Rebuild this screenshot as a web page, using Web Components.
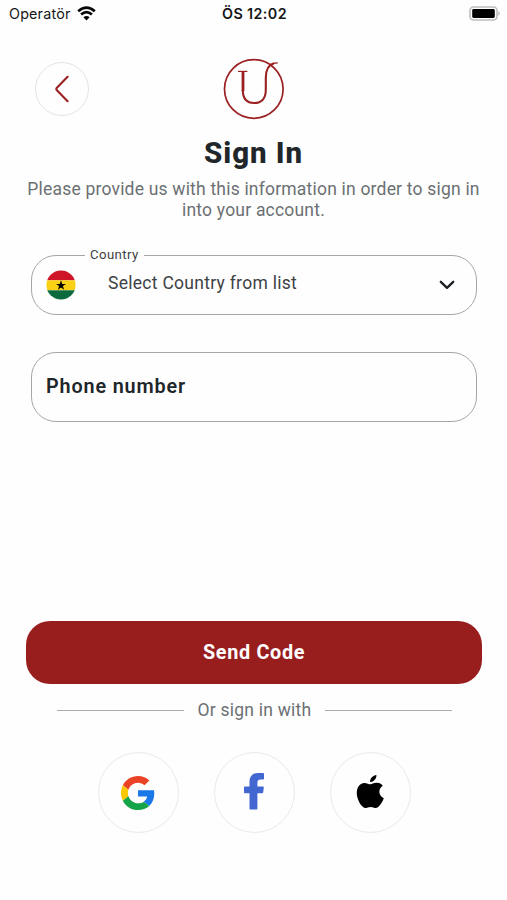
<!DOCTYPE html>
<html lang="en">
<head>
    <meta charset="UTF-8">
    <meta name="viewport" content="width=device-width, initial-scale=1.0">
    <title>Sign In</title>
    <style>
        body {
            margin: 0;
            background: #fefefe;
            color: #20262a;
            font-family: Roboto, "Liberation Sans", sans-serif;
        }
    </style>
</head>
<body>
    <sign-in-screen>
        <status-bar slot="status" carrier="Operatör" time="ÖS 12:02"></status-bar>
        <screen-header slot="header"></screen-header>
        <screen-title slot="title" heading="Sign In">
            <div>Please provide us with this information in order to sign in</div>
            <div>into your account.</div>
        </screen-title>
        <country-select slot="fields" label="Country">Select Country from list</country-select>
        <phone-field slot="fields">Phone number</phone-field>
        <main-button slot="actions">Send Code</main-button>
        <text-divider slot="actions">Or sign in with</text-divider>
        <social-row slot="actions">
            <social-button name="google"></social-button>
            <social-button name="facebook"></social-button>
            <social-button name="apple"></social-button>
        </social-row>
    </sign-in-screen>

    <script>
        class BaseElement extends HTMLElement {
            connectedCallback() {
                if (this.shadowRoot) return;
                this.attachShadow({ mode: 'open' });
                this.shadowRoot.innerHTML = this.render();
            }
        }

        class SignInScreen extends BaseElement {
            render() {
                return `
                    <style>
                        :host {
                            display: flex;
                            flex-direction: column;
                            width: 507px;
                            height: 900px;
                            overflow: hidden;
                        }
                        .fields {
                            display: flex;
                            flex-direction: column;
                            gap: 37px;
                            margin: 34px 30px 0 31px;
                        }
                        .actions {
                            display: flex;
                            flex-direction: column;
                            margin: auto 25px 67px 26px;
                        }
                    </style>
                    <slot name="status"></slot>
                    <slot name="header"></slot>
                    <slot name="title"></slot>
                    <div class="fields"><slot name="fields"></slot></div>
                    <div class="actions"><slot name="actions"></slot></div>
                `;
            }
        }

        class StatusBar extends BaseElement {
            render() {
                return `
                    <style>
                        :host {
                            display: grid;
                            grid-template-columns: 1fr auto 1fr;
                            align-items: center;
                            height: 28px;
                            padding: 0 7px 0 9px;
                            font: 14.3px/28px Inter, sans-serif;
                            color: #161616;
                        }
                        .left { display: flex; align-items: center; gap: 6px; }
                        .carrier { letter-spacing: 0.2px; }
                        .time { font-weight: 600; letter-spacing: 0.4px; }
                        .battery { justify-self: end; }
                        svg { display: block; margin-top: -2px; }
                    </style>
                    <div class="left">
                        <span class="carrier">${this.getAttribute('carrier')}</span>
                        <svg width="19" height="15" viewBox="0 0 19 15" fill="none" stroke="#080808" stroke-width="2.7">
                            <path d="M1.2 5.3Q9.5 -2 17.8 5.3"/>
                            <path d="M4.1 8.6Q9.5 3.8 14.9 8.6"/>
                            <path d="M9.5 14.4L6.4 11.2Q9.5 8.6 12.6 11.2Z" fill="#080808" stroke="none"/>
                        </svg>
                    </div>
                    <span class="time">${this.getAttribute('time')}</span>
                    <svg class="battery" width="31" height="15" viewBox="0 0 31 15">
                        <rect x="1" y="1" width="27" height="13" rx="3.5" fill="#fff" stroke="#bdbdbd" stroke-width="1.6"/>
                        <rect x="3.2" y="3" width="22.6" height="9" rx="1.4" fill="#000"/>
                        <path d="M29.3 5.3Q31 6 31 7.5T29.3 9.7Z" fill="#bdbdbd"/>
                    </svg>
                `;
            }
        }

        class ScreenHeader extends BaseElement {
            render() {
                return `
                    <style>
                        :host {
                            display: grid;
                            grid-template-columns: 1fr auto 1fr;
                            align-items: center;
                            height: 62px;
                            padding: 30px 35px 0;
                        }
                        .back {
                            box-sizing: border-box;
                            display: flex;
                            align-items: center;
                            justify-content: center;
                            width: 54px;
                            height: 54px;
                            padding: 0;
                            border: 1px solid #e4e4e4;
                            border-radius: 50%;
                            background: none;
                        }
                        svg { display: block; }
                    </style>
                    <button class="back" aria-label="Back">
                        <svg width="14" height="28" viewBox="0 0 14 28" fill="none" stroke="#9b2021" stroke-width="2.1" stroke-linecap="round" stroke-linejoin="round">
                            <path d="M12.6 1.8L1.9 12.7Q0.8 14 1.9 15.3L12.6 26.2"/>
                        </svg>
                    </button>
                    <svg width="62" height="62" viewBox="223 58 62 62" fill="none" stroke="#9b2021">
                        <circle cx="253.8" cy="89" r="29.3" stroke-width="1.7"/>
                        <path d="M238 71.4H247.4" stroke-width="1.2"/>
                        <path d="M243 71.5V91" stroke-width="2.8"/>
                        <path d="M242.8 90C242.8 99 247 103 254.2 103S265.8 98.5 265.8 90V78C265.8 70 269 64.5 274 63.2" stroke-width="2.1"/>
                        <path d="M271 65.2Q273.5 62.7 277.8 62.9" stroke-width="1.1"/>
                    </svg>
                `;
            }
        }

        class ScreenTitle extends BaseElement {
            render() {
                return `
                    <style>
                        :host { display: block; text-align: center; }
                        h1 {
                            margin: 16px 0 9px;
                            font-size: 29.5px;
                            line-height: 34px;
                            font-weight: 800;
                            letter-spacing: 0.9px;
                        }
                        .text {
                            font-size: 17.5px;
                            line-height: 21px;
                            letter-spacing: 0.2px;
                            color: #6b7073;
                        }
                    </style>
                    <h1>${this.getAttribute('heading')}</h1>
                    <div class="text"><slot></slot></div>
                `;
            }
        }

        class CountrySelect extends BaseElement {
            render() {
                return `
                    <style>
                        :host { display: block; }
                        fieldset {
                            box-sizing: border-box;
                            height: 67px;
                            min-width: 0;
                            margin: -7px 0 0;
                            padding: 0 21px 0 14px;
                            border: 1px solid #a6a6a6;
                            border-radius: 25px;
                        }
                        legend {
                            margin-left: 39px;
                            padding: 0 5px;
                            font-size: 13.2px;
                            line-height: 14px;
                            letter-spacing: 0.4px;
                            color: #3d4245;
                        }
                        .row { display: flex; align-items: center; height: 46px; }
                        .value {
                            flex: 1;
                            margin: -4px 0 0 32px;
                            font-size: 17.5px;
                            letter-spacing: 0.28px;
                            color: #3d4245;
                        }
                        svg { display: block; }
                    </style>
                    <fieldset>
                        <legend>${this.getAttribute('label')}</legend>
                        <div class="row">
                            <svg width="30" height="30" viewBox="0 0 30 30">
                                <clipPath id="round"><circle cx="15" cy="15" r="14.6"/></clipPath>
                                <g clip-path="url(#round)">
                                    <rect width="30" height="10.3" fill="#ce1527"/>
                                    <rect y="10.3" width="30" height="10" fill="#fbd116"/>
                                    <rect y="20.3" width="30" height="10" fill="#0b6b3f"/>
                                </g>
                                <path d="M15 10.2L16.2 13.9H20L16.9 16.1L18.1 19.8L15 17.5L11.9 19.8L13.1 16.1L10 13.9H13.8Z" fill="#000"/>
                            </svg>
                            <span class="value"><slot></slot></span>
                            <svg width="16" height="10" viewBox="0 0 16 10" fill="none" stroke="#1b1f22" stroke-width="2.3" stroke-linecap="round" stroke-linejoin="round">
                                <path d="M1.8 1.8L8 7.8L14.2 1.8"/>
                            </svg>
                        </div>
                    </fieldset>
                `;
            }
        }

        class PhoneField extends BaseElement {
            render() {
                return `
                    <style>
                        :host {
                            box-sizing: border-box;
                            display: flex;
                            align-items: center;
                            height: 70px;
                            padding: 0 14px 2px;
                            border: 1px solid #a6a6a6;
                            border-radius: 25px;
                            font-size: 19.8px;
                            font-weight: 600;
                            letter-spacing: 0.85px;
                        }
                    </style>
                    <slot></slot>
                `;
            }
        }

        class MainButton extends BaseElement {
            render() {
                return `
                    <style>
                        :host { display: block; }
                        button {
                            display: block;
                            width: 100%;
                            height: 63px;
                            padding: 0;
                            border: 0;
                            border-radius: 24px;
                            background: #981e1e;
                            color: #fff;
                            font: 700 19.8px Roboto, sans-serif;
                            letter-spacing: 0.7px;
                        }
                    </style>
                    <button><slot></slot></button>
                `;
            }
        }

        class TextDivider extends BaseElement {
            render() {
                return `
                    <style>
                        :host {
                            display: flex;
                            align-items: center;
                            justify-content: space-between;
                            height: 20px;
                            margin: 16px 30px 0 31px;
                            font-size: 17.5px;
                            letter-spacing: 0.22px;
                            color: #6b7073;
                        }
                        :host::before, :host::after {
                            content: "";
                            width: 127px;
                            height: 1px;
                            background: #a8acac;
                        }
                    </style>
                    <slot></slot>
                `;
            }
        }

        class SocialRow extends BaseElement {
            render() {
                return `
                    <style>
                        :host {
                            display: flex;
                            justify-content: center;
                            gap: 35px;
                            margin-top: 32px;
                        }
                    </style>
                    <slot></slot>
                `;
            }
        }

        const socialIcons = {
            google: `
                <svg width="34" height="34" viewBox="0 0 48 48">
                    <path fill="#ea4326" d="M24 9.5c3.54 0 6.71 1.22 9.21 3.6l6.85-6.85C35.9 2.38 30.47 0 24 0 14.62 0 6.51 5.38 2.56 13.22l7.98 6.19C12.43 13.72 17.74 9.5 24 9.5z"/>
                    <path fill="#1a78e8" d="M46.98 24.55c0-1.57-.15-3.09-.38-4.55H24v9.02h12.94c-.58 2.96-2.26 5.48-4.78 7.18l7.73 6c4.51-4.18 7.09-10.36 7.09-17.65z"/>
                    <path fill="#fcc800" d="M10.53 28.59c-.48-1.45-.76-2.99-.76-4.59s.27-3.14.76-4.59l-7.98-6.19C.92 16.46 0 20.12 0 24c0 3.88.92 7.54 2.56 10.78l7.97-6.19z"/>
                    <path fill="#15a347" d="M24 48c6.48 0 11.93-2.13 15.89-5.81l-7.73-6c-2.15 1.45-4.92 2.3-8.16 2.3-6.26 0-11.57-4.22-13.47-9.91l-7.98 6.19C6.51 42.62 14.62 48 24 48z"/>
                </svg>`,
            facebook: `
                <svg width="22" height="38" viewBox="0 0 22 38" style="margin-top: -3px">
                    <path fill="#4267d0" d="M6.5 36.5V21.2H1.9Q1 21.2 1 20.3V15.5Q1 14.6 1.9 14.6H6.5V10.2C6.5 4.2 9.8 .9 15.2 .9C17.4 .9 19.4 1 20.2 1.1Q21 1.2 21 2V6.6Q21 7.5 20.2 7.5H17.8C15.2 7.5 14.4 8.7 14.4 10.8V14.6H20Q21 14.6 20.8 15.6L20.2 20.2Q20.1 21.2 19.1 21.2H14.4V36.5Q14.4 37.4 13.5 37.4H7.4Q6.5 37.4 6.5 36.5Z"/>
                </svg>`,
            apple: `
                <svg width="28" height="34" viewBox="0 0 28 34" style="margin-top: -2px">
                    <path d="M14.2 9.3C15.8 9.3 18 7.5 21 7.7C23.4 7.8 25.6 8.9 26.8 10.8C21.7 14 22.5 21 27.8 23.2C26.7 26.3 24.3 30.4 21.9 32.2C19.3 34.1 17.7 31.9 14.6 31.9C11.5 31.9 9.7 34.1 7.3 32.3C3.6 29.5 .4 22.7 .8 16.8C1.2 11.4 4.4 8.1 8.2 7.9C10.8 7.8 12.8 9.3 14.2 9.3Z"/>
                    <path d="M14 7C13.9 3.6 17 .3 20.4 0C20.8 3.6 17.4 7.2 14 7Z"/>
                </svg>`
        };

        class SocialButton extends BaseElement {
            render() {
                return `
                    <style>
                        :host {
                            box-sizing: border-box;
                            display: flex;
                            align-items: center;
                            justify-content: center;
                            width: 81px;
                            height: 81px;
                            border: 1px solid #e9e9e9;
                            border-radius: 50%;
                        }
                        svg { display: block; }
                    </style>
                    ${socialIcons[this.getAttribute('name')]}
                `;
            }
        }

        customElements.define('sign-in-screen', SignInScreen);
        customElements.define('status-bar', StatusBar);
        customElements.define('screen-header', ScreenHeader);
        customElements.define('screen-title', ScreenTitle);
        customElements.define('country-select', CountrySelect);
        customElements.define('phone-field', PhoneField);
        customElements.define('main-button', MainButton);
        customElements.define('text-divider', TextDivider);
        customElements.define('social-row', SocialRow);
        customElements.define('social-button', SocialButton);
    </script>
</body>
</html>
